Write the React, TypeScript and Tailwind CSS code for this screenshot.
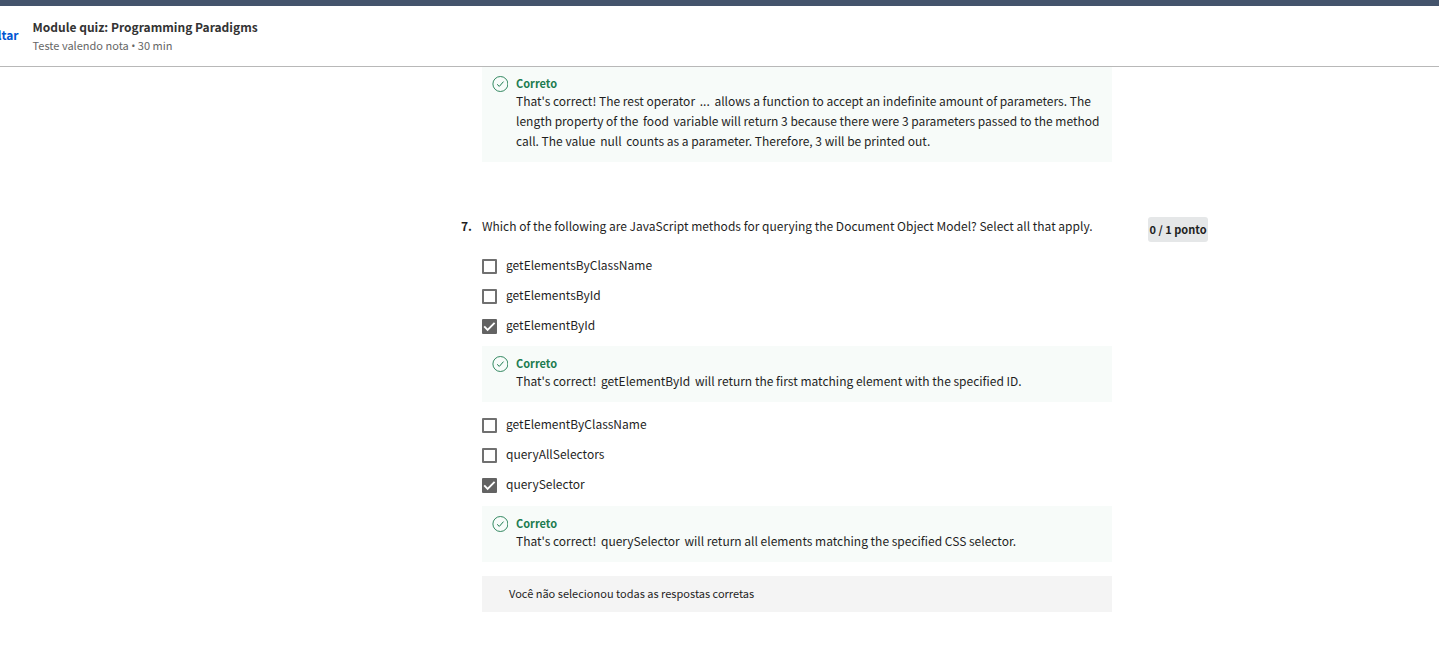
import type { ReactNode } from "react";

function CorrectPanel({ children }: { children: ReactNode }) {
  return (
    <section className="flex gap-2 bg-[#f7fbf9] px-2.5 pb-[11px]">
      <svg className="mt-2.5 h-4 w-4 shrink-0 text-[#1d7c50]" viewBox="0 0 16 16" fill="none" stroke="currentColor" aria-hidden="true">
        <circle cx="8.4" cy="8" r="7.5" strokeWidth="0.9" />
        <path d="M5.1 8.3l2.2 2.1 4.2-4.8" strokeWidth="1" />
      </svg>
      <div className="pt-[9px]">
        <h3 className="text-[11px] leading-4 font-bold text-[#1d7c50]">Correto</h3>
        <p className="text-xs leading-5">{children}</p>
      </div>
    </section>
  );
}

function Code({ children }: { children: ReactNode }) {
  return <code className="mx-0.5 font-['Noto_Sans_CJK_SC',sans-serif] text-xs">{children}</code>;
}

function Option({ label, checked = false }: { label: string; checked?: boolean }) {
  return (
    <label className="flex h-[30px] items-center gap-[9px]">
      <span className="grid h-[15px] w-[15px] shrink-0">
        <input
          type="checkbox"
          defaultChecked={checked}
          className="peer col-start-1 row-start-1 h-[15px] w-[15px] appearance-none rounded-[1px] border-2 border-[#707070] bg-white checked:border-[#636363] checked:bg-[#636363]"
        />
        <svg
          className="pointer-events-none invisible col-start-1 row-start-1 h-[15px] w-[15px] peer-checked:visible"
          viewBox="0 0 15 15"
          fill="none"
          stroke="white"
          strokeWidth="1.9"
          aria-hidden="true"
        >
          <path d="M2.2 7.4l3.4 3.4 7-7" />
        </svg>
      </span>
      <span className="pb-0.5 text-xs leading-5">{label}</span>
    </label>
  );
}

export default function App() {
  return (
    <div className="overflow-x-hidden bg-white font-['Noto_Sans_CJK_SC',sans-serif] text-[#1f1f1f]">
      <div className="h-1.5 bg-[#44546c]" />
      <header className="relative z-10 flex h-[61px] items-center gap-3.5 border-b border-[#b8b8b8] bg-white">
        <a href="#voltar" className="-ml-[17px] pb-0.5 text-xs leading-5 font-bold text-[#0056d2]">
          Voltar
        </a>
        <div>
          <h1 className="text-xs leading-[18px] font-bold text-[#333]">Module quiz: Programming Paradigms</h1>
          <p className="text-[11px] leading-[18px] text-[#666]">
            Teste valendo nota <span className="font-['Open_Sans',sans-serif] text-[11px] leading-none">•</span> 30 min
          </p>
        </div>
      </header>
      <main className="-mt-px pr-[231px] pb-10 pl-[461px]">
        <div className="mr-24 ml-[21px]">
          <CorrectPanel>
            That's correct! The rest operator <Code>...</Code> allows a function to accept an indefinite amount of
            parameters. The length property of the <Code>food</Code> variable will return 3 because there were 3
            parameters passed to the method call. The value <Code>null</Code> counts as a parameter. Therefore, 3 will be
            printed out.
          </CorrectPanel>
        </div>
        <div className="mt-[54px] flex items-start">
          <span className="w-[21px] shrink-0 text-xs leading-5 font-bold">7.</span>
          <fieldset className="min-w-0 flex-1">
            <legend className="text-xs leading-5">
              Which of the following are JavaScript methods for querying the Document Object Model? Select all that
              apply.
            </legend>
            <div className="mt-[15px]">
              <Option label="getElementsByClassName" />
              <Option label="getElementsById" />
              <Option label="getElementById" checked />
            </div>
            <div className="mt-[5px] mb-2">
              <CorrectPanel>
                That's correct! <Code>getElementById</Code> will return the first matching element with the specified ID.
              </CorrectPanel>
            </div>
            <Option label="getElementByClassName" />
            <Option label="queryAllSelectors" />
            <Option label="querySelector" checked />
            <div className="mt-1.5">
              <CorrectPanel>
                That's correct! <Code>querySelector</Code> will return all elements matching the specified CSS selector.
              </CorrectPanel>
            </div>
            <p className="mt-3.5 bg-[#f4f4f4] px-[27px] pt-[7px] pb-[9px] text-[11px] leading-5">
              Você não selecionou todas as respostas corretas
            </p>
          </fieldset>
          <span className="mt-px ml-9 flex h-[25px] w-[60px] items-center justify-center rounded-[3px] bg-[#e5e7e8] text-[11px] font-bold whitespace-nowrap">
            0 / 1 ponto
          </span>
        </div>
      </main>
    </div>
  );
}
